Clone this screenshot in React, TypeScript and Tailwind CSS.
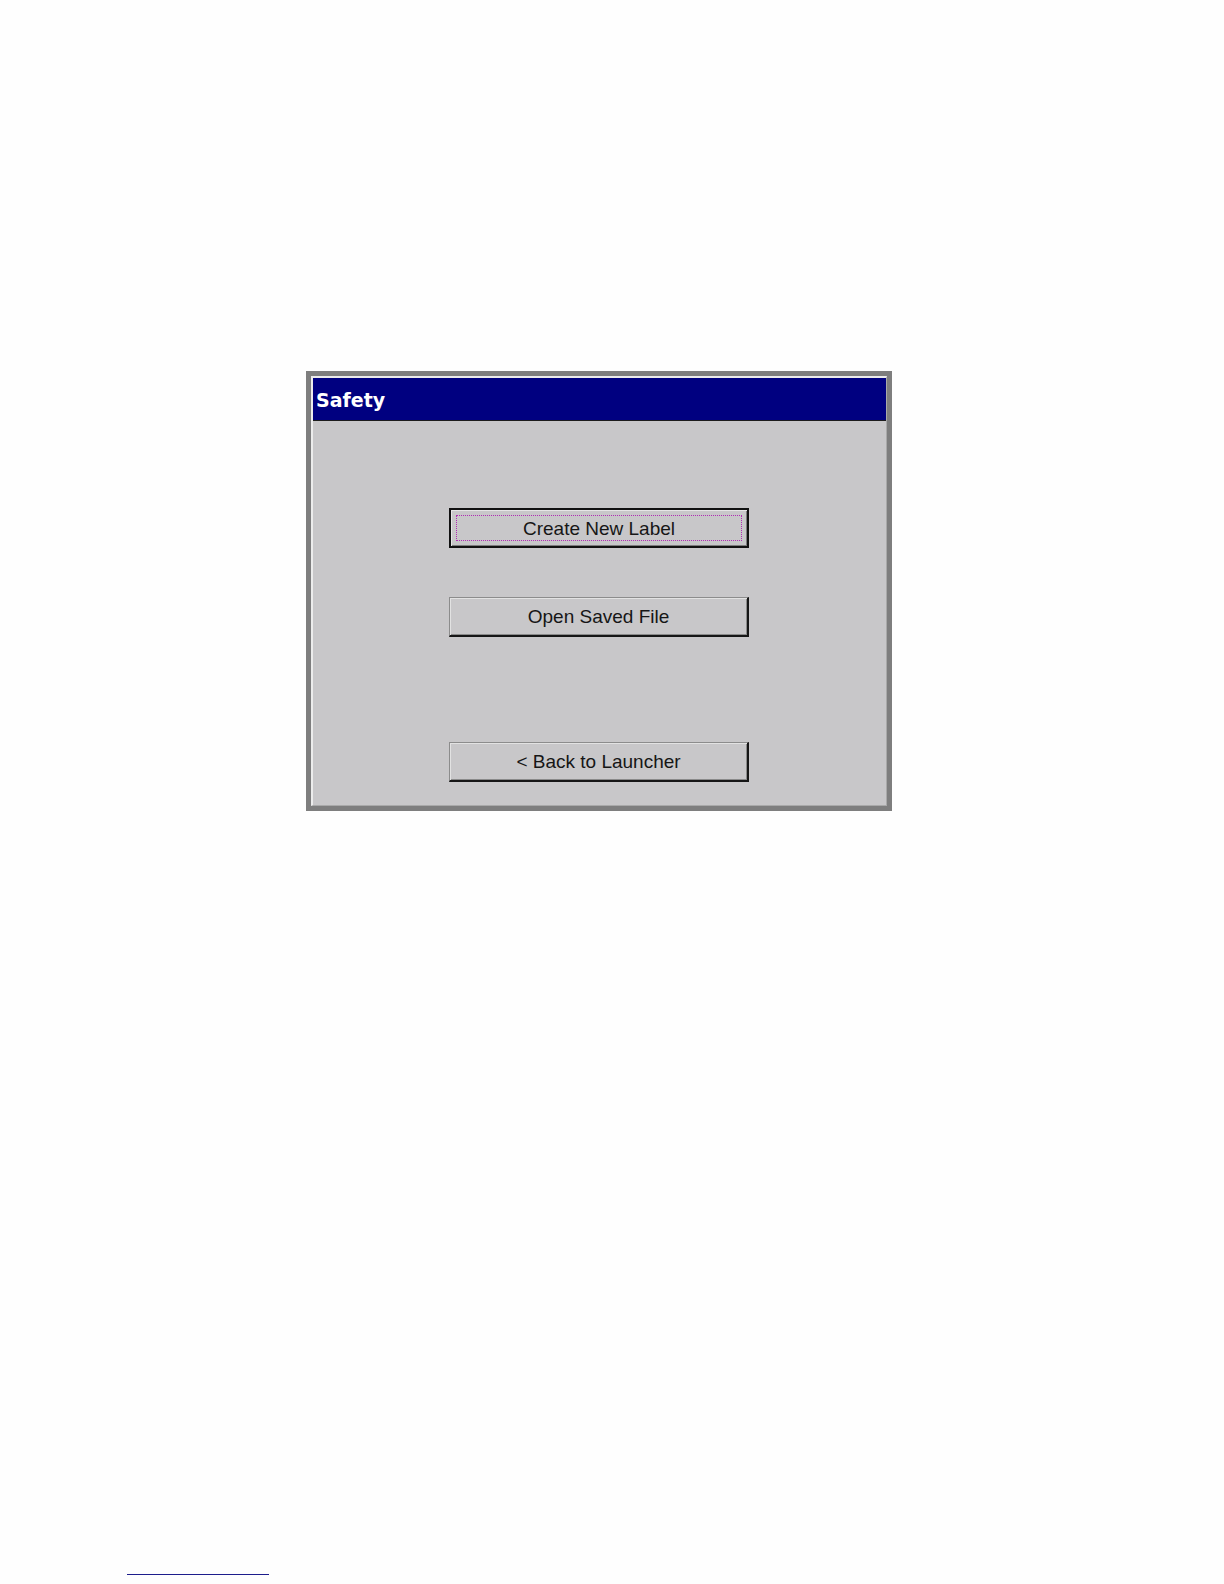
import type { ReactNode } from 'react';

// Win CE style push button
function CeButton({
  children,
  focused = false,
}: {
  children: ReactNode;
  focused?: boolean;
}) {
  if (focused) {
    return (
      <button
        type="button"
        className="w-[300px] h-[40px] border-2 border-[#111] bg-[#c8c7c9] shadow-[inset_1px_1px_0_#e6e6e6,inset_-1px_-1px_0_#7c7c7c] p-[5px]"
      >
        <div className="h-full w-full border border-dotted border-[#b02cb4] flex items-center justify-center text-[19px] leading-none text-[#161616] font-['Liberation_Sans',Arial,sans-serif]">
          {children}
        </div>
      </button>
    );
  }

  return (
    <button
      type="button"
      className="w-[300px] h-[40px] border-t border-l border-t-[#8c8c8c] border-l-[#8c8c8c] border-r-2 border-b-2 border-r-[#161616] border-b-[#161616] bg-[#c8c7c9] shadow-[inset_1px_1px_0_#e2e2e2,inset_-1px_-1px_0_#8a8a8a] flex items-center justify-center text-[19px] leading-none text-[#161616] font-['Liberation_Sans',Arial,sans-serif]"
    >
      {children}
    </button>
  );
}

export default function App() {
  return (
    <div className="w-full h-[1584px] bg-[#fefefe] pt-[371px] overflow-hidden">
      <div className="ml-[306px] w-[586px] h-[440px] border-[5px] border-[#7e7e7e]">
        <div className="h-full flex flex-col border-t-2 border-l-2 border-t-[#ececec] border-l-[#ececec] border-r border-b border-r-[#a9a9a9] border-b-[#a9a9a9]">
          <div className="h-[43px] bg-[#000080] border-b border-[#1c1c1c] flex items-center pl-[3px] pt-[2px]">
            <span className="text-white font-bold text-[19px] font-['DejaVu_Sans',Verdana,sans-serif]">
              Safety
            </span>
          </div>
          <div className="flex-1 bg-[#c8c7c9] flex flex-col pl-[136px] pt-[87px]">
            <CeButton focused>Create New Label</CeButton>
            <div className="mt-[49px]">
              <CeButton>Open Saved File</CeButton>
            </div>
            <div className="mt-[105px]">
              <CeButton>&lt; Back to Launcher</CeButton>
            </div>
          </div>
        </div>
      </div>
      <div className="mt-[763px] ml-[127px] w-[142px] h-px bg-[#1d1d8c]" />
    </div>
  );
}
